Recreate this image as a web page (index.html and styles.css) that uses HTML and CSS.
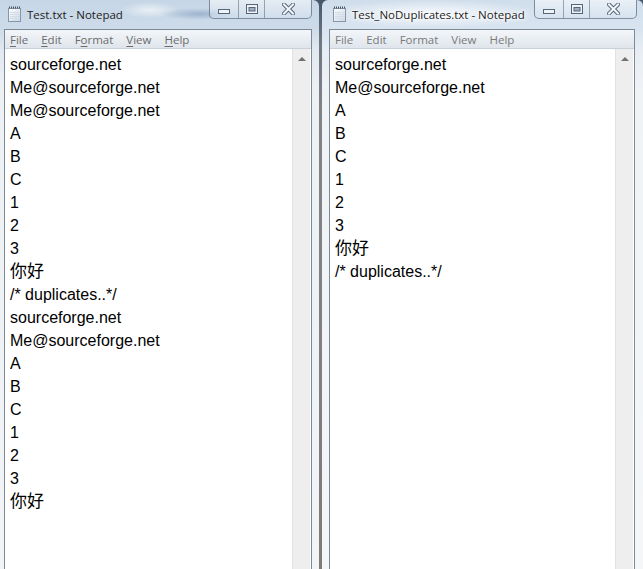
FILE: index.html
```html
<!DOCTYPE html>
<html>
<head>
<meta charset="utf-8">
<title>Notepad</title>
<link rel="stylesheet" href="styles.css">
</head>
<body>
<div class="desktop">
  <div class="window win-left">
    <div class="titlebar">
      <svg class="app-icon" width="13" height="16" viewBox="0 0 13 16">
        <defs><linearGradient id="pg1" x1="0" y1="0" x2="1" y2="1"><stop offset="0" stop-color="#ffffff"/><stop offset="1" stop-color="#c9d7e6"/></linearGradient></defs>
        <rect x="0.5" y="2.5" width="12" height="13" fill="url(#pg1)" stroke="#8795a5"/>
        <path d="M2 6.5h9M2 8.5h9M2 10.5h9M2 12.5h7" stroke="#d3dce6" stroke-width="1"/>
        <path d="M1 1.5h11" stroke="#4a5560" stroke-width="2" stroke-dasharray="1 1"/>
      </svg>
      <span class="title">Test.txt - Notepad</span>
      <div class="caption">
        <div class="cap-btn cap-min"><svg width="12" height="5" viewBox="0 0 12 5"><rect x="0.5" y="0.5" width="11" height="4" fill="#eef3f8" stroke="#56657a"/></svg></div>
        <div class="cap-btn cap-max"><svg width="12" height="10" viewBox="0 0 12 10"><rect x="0.5" y="0.5" width="11" height="9" fill="#eef3f8" stroke="#56657a"/><rect x="3" y="3.5" width="6" height="3.5" fill="#9fb0c2" stroke="#56657a" stroke-width="1"/></svg></div>
        <div class="cap-btn cap-close"><svg width="13" height="12" viewBox="0 0 13 12"><path d="M2 1.5L11 10.5M11 1.5L2 10.5" stroke="#56657a" stroke-width="4" stroke-linecap="square"/><path d="M2 1.5L11 10.5M11 1.5L2 10.5" stroke="#f4f7fa" stroke-width="2" stroke-linecap="square"/></svg></div>
      </div>
    </div>
    <div class="client">
      <div class="menubar menubar-ul">
        <span class="menu-item"><u>F</u>ile</span>
        <span class="menu-item"><u>E</u>dit</span>
        <span class="menu-item">F<u>o</u>rmat</span>
        <span class="menu-item"><u>V</u>iew</span>
        <span class="menu-item"><u>H</u>elp</span>
      </div>
      <div class="editor">
        <div class="doc">
          <div class="ln">sourceforge.net</div>
          <div class="ln">Me@sourceforge.net</div>
          <div class="ln">Me@sourceforge.net</div>
          <div class="ln">A</div>
          <div class="ln">B</div>
          <div class="ln">C</div>
          <div class="ln">1</div>
          <div class="ln">2</div>
          <div class="ln">3</div>
          <div class="ln cjk">你好</div>
          <div class="ln">/* duplicates..*/</div>
          <div class="ln">sourceforge.net</div>
          <div class="ln">Me@sourceforge.net</div>
          <div class="ln">A</div>
          <div class="ln">B</div>
          <div class="ln">C</div>
          <div class="ln">1</div>
          <div class="ln">2</div>
          <div class="ln">3</div>
          <div class="ln cjk">你好</div>
        </div>
        <div class="scrollbar"><span class="arrow"></span></div>
      </div>
    </div>
  </div>

  <div class="window win-right">
    <div class="titlebar">
      <svg class="app-icon" width="13" height="16" viewBox="0 0 13 16">
        <defs><linearGradient id="pg2" x1="0" y1="0" x2="1" y2="1"><stop offset="0" stop-color="#ffffff"/><stop offset="1" stop-color="#c9d7e6"/></linearGradient></defs>
        <rect x="0.5" y="2.5" width="12" height="13" fill="url(#pg2)" stroke="#8795a5"/>
        <path d="M2 6.5h9M2 8.5h9M2 10.5h9M2 12.5h7" stroke="#d3dce6" stroke-width="1"/>
        <path d="M1 1.5h11" stroke="#4a5560" stroke-width="2" stroke-dasharray="1 1"/>
      </svg>
      <span class="title title-glow">Test_NoDuplicates.txt - Notepad</span>
      <div class="caption caption-right">
        <div class="cap-btn cap-min"><svg width="12" height="5" viewBox="0 0 12 5"><rect x="0.5" y="0.5" width="11" height="4" fill="#eef3f8" stroke="#56657a"/></svg></div>
        <div class="cap-btn cap-max"><svg width="12" height="10" viewBox="0 0 12 10"><rect x="0.5" y="0.5" width="11" height="9" fill="#eef3f8" stroke="#56657a"/><rect x="3" y="3.5" width="6" height="3.5" fill="#9fb0c2" stroke="#56657a" stroke-width="1"/></svg></div>
        <div class="cap-btn cap-close"><svg width="13" height="12" viewBox="0 0 13 12"><path d="M2 1.5L11 10.5M11 1.5L2 10.5" stroke="#56657a" stroke-width="4" stroke-linecap="square"/><path d="M2 1.5L11 10.5M11 1.5L2 10.5" stroke="#f4f7fa" stroke-width="2" stroke-linecap="square"/></svg></div>
      </div>
    </div>
    <div class="client">
      <div class="menubar menubar-plain">
        <span class="menu-item">File</span>
        <span class="menu-item">Edit</span>
        <span class="menu-item">Format</span>
        <span class="menu-item">View</span>
        <span class="menu-item">Help</span>
      </div>
      <div class="editor">
        <div class="doc">
          <div class="ln">sourceforge.net</div>
          <div class="ln">Me@sourceforge.net</div>
          <div class="ln">A</div>
          <div class="ln">B</div>
          <div class="ln">C</div>
          <div class="ln">1</div>
          <div class="ln">2</div>
          <div class="ln">3</div>
          <div class="ln cjk">你好</div>
          <div class="ln">/* duplicates..*/</div>
        </div>
        <div class="scrollbar"><span class="arrow"></span></div>
      </div>
    </div>
  </div>
</div>
</body>
</html>
```
FILE: styles.css
```css
html, body {
  margin: 0;
  padding: 0;
}
body {
  width: 643px;
  height: 569px;
  overflow: hidden;
  background: #7a7f86;
  font-family: "Open Sans", "Noto Sans", sans-serif;
}
.desktop {
  display: flex;
  gap: 3px;
  height: 569px;
  background: linear-gradient(to bottom, #46576a 0, #6e7782 40px, #80848a 120px, #7c7c7c 100%);
}
.window {
  box-sizing: border-box;
  height: 100%;
  display: flex;
  flex-direction: column;
  border-radius: 6px 6px 0 0;
}
.win-left {
  width: 319px;
  padding: 0 7px 0 4px;
  border-radius: 0 6px 0 0;
  background:
    radial-gradient(ellipse 40px 6px at 200px 14px, rgba(120, 150, 185, 0.55), rgba(120, 150, 185, 0) 100%),
    radial-gradient(ellipse 30px 8px at 150px 10px, rgba(255, 255, 255, 0.6), rgba(255, 255, 255, 0) 100%),
    linear-gradient(to bottom, #c6d6e6 0, #cddbe9 29px, #e2e9f0 50px, #edf1f4 90px, #f2f4f6 100%);
}
.win-right {
  width: 321px;
  padding: 0 8px 0 7px;
  background:
    radial-gradient(ellipse 110px 14px at 110px 14px, rgba(255, 255, 255, 0.85), rgba(255, 255, 255, 0) 100%),
    linear-gradient(to bottom, #d0deec 0, #d8e4f0 29px, #e7edf3 50px, #f0f3f6 90px, #f4f6f8 100%);
}
.titlebar {
  height: 29px;
  flex: none;
  display: flex;
  align-items: center;
}
.app-icon {
  flex: none;
  margin-left: 4px;
  margin-top: -2px;
}
.title {
  margin-left: 6px;
  font-size: 11.5px;
  color: #1b1b1b;
  white-space: nowrap;
  margin-top: -1px;
}
.title-glow {
  text-shadow: 0 0 6px #ffffff, 0 0 4px #ffffff, 0 0 2px #ffffff;
}
.caption {
  margin-left: auto;
  align-self: flex-start;
  display: flex;
  height: 18px;
  border: 1px solid rgba(60, 78, 100, 0.6);
  border-top: 0;
  border-radius: 0 0 5px 5px;
  background: linear-gradient(to bottom, rgba(255, 255, 255, 0.55), rgba(215, 228, 240, 0.45));
  overflow: hidden;
}
.caption-right {
  margin-right: -2px;
}
.cap-btn {
  display: flex;
  align-items: center;
  justify-content: center;
}
.cap-min {
  width: 28px;
  border-right: 1px solid rgba(60, 78, 100, 0.45);
}
.cap-min svg {
  margin-top: 5px;
}
.cap-max {
  width: 25px;
  border-right: 1px solid rgba(60, 78, 100, 0.45);
}
.cap-max svg {
  margin-top: -1px;
}
.cap-close {
  width: 46px;
}
.cap-close svg {
  margin-top: -1px;
}
.client {
  flex: 1;
  min-height: 0;
  display: flex;
  flex-direction: column;
  border: 1px solid #7c8998;
  border-bottom: 0;
  background: #ffffff;
}
.menubar {
  flex: none;
  height: 18px;
  display: flex;
  align-items: center;
  border-bottom: 1px solid #c9d0d8;
  background: linear-gradient(to bottom, #f3f6f9 0, #e8edf2 55%, #dfe5eb 100%);
  font-size: 11.5px;
  color: #6c6c6c;
}
.menubar-plain {
  color: #7a7a7a;
}
.menu-item {
  padding: 0 6.5px;
  white-space: nowrap;
}
.menu-item:first-child {
  padding-left: 5px;
}
.menu-item u {
  text-decoration: underline;
  text-underline-offset: 2px;
}
.editor {
  flex: 1;
  min-height: 0;
  display: flex;
  background: #ffffff;
}
.doc {
  flex: 1;
  min-width: 0;
  padding: 4px 0 0 5px;
  font-family: "Liberation Sans", Arial, sans-serif;
  font-size: 16px;
  line-height: 23px;
  color: #000000;
  overflow: hidden;
}
.ln {
  height: 23px;
  white-space: pre;
}
.cjk {
  font-family: "Noto Sans CJK SC", "Noto Sans CJK JP", sans-serif;
  font-size: 17px;
  font-weight: 400;
  line-height: 19px;
}
.scrollbar {
  flex: none;
  width: 17px;
  margin-right: 1px;
  background: #eeeeee;
  border-left: 1px solid #e2e2e2;
}
.arrow {
  display: block;
  width: 0;
  height: 0;
  margin: 8px auto 0;
  border-left: 4px solid transparent;
  border-right: 4px solid transparent;
  border-bottom: 4px solid #717171;
}
```
